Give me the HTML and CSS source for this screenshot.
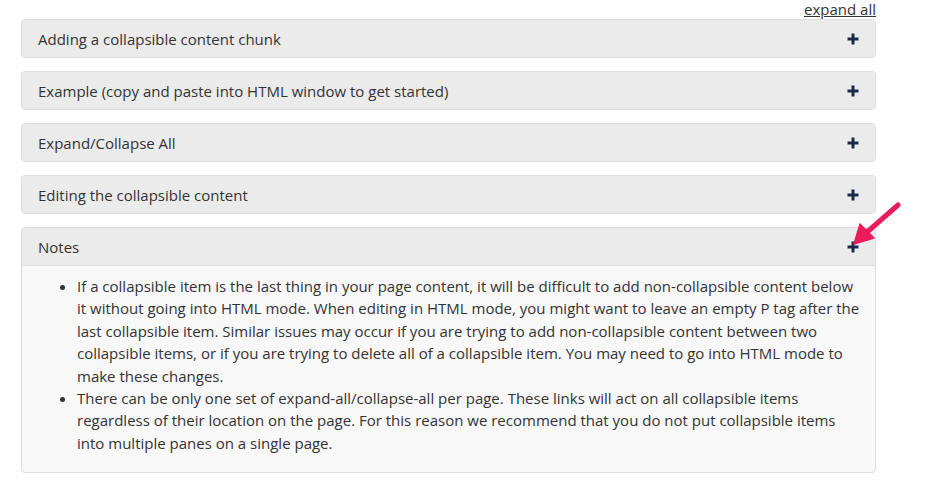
FILE: index.html
```html
<!DOCTYPE html>
<html>
<head>
<meta charset="utf-8">
<link rel="stylesheet" href="styles.css">
</head>
<body>
<div class="wrap">
  <div class="toolbar"><a class="expand" href="#">expand all</a></div>
  <div class="panel">
    <div class="head"><span>Adding a collapsible content chunk</span><svg class="plus" viewBox="0 0 12 12"><path d="M6 0.5v11M0.5 6h11"/></svg></div>
  </div>
  <div class="panel">
    <div class="head"><span>Example (copy and paste into HTML window to get started)</span><svg class="plus" viewBox="0 0 12 12"><path d="M6 0.5v11M0.5 6h11"/></svg></div>
  </div>
  <div class="panel">
    <div class="head"><span>Expand/Collapse All</span><svg class="plus" viewBox="0 0 12 12"><path d="M6 0.5v11M0.5 6h11"/></svg></div>
  </div>
  <div class="panel">
    <div class="head"><span>Editing the collapsible content</span><svg class="plus" viewBox="0 0 12 12"><path d="M6 0.5v11M0.5 6h11"/></svg></div>
  </div>
  <div class="panel open">
    <div class="head"><span>Notes</span><svg class="plus" viewBox="0 0 12 12"><path d="M6 0.5v11M0.5 6h11"/></svg></div>
    <div class="body">
      <ul>
        <li>If a collapsible item is the last thing in your page content, it will be difficult to add non-collapsible content below it without going into HTML mode. When editing in HTML mode, you might want to leave an empty P tag after the last collapsible item. Similar issues may occur if you are trying to add non-collapsible content between two collapsible items, or if you are trying to delete all of a collapsible item. You may need to go into HTML mode to make these changes.</li>
        <li>There can be only one set of expand-all/collapse-all per page. These links will act on all collapsible items regardless of their location on the page. For this reason we recommend that you do not put collapsible items into multiple panes on a single page.</li>
      </ul>
    </div>
    <svg class="arrow" viewBox="0 0 50 46" width="50" height="46"><path class="shaft" d="M46 3 L14 31"/><path class="tip" d="M2 42 L8 22 L22 36 Z"/></svg>
  </div>
</div>
</body>
</html>
```

FILE: styles.css
```css
html, body {
  margin: 0;
  padding: 0;
  background: #ffffff;
}
body {
  font-family: "Open Sans", "Liberation Sans", sans-serif;
  font-size: 15px;
  color: #333333;
}
.wrap {
  width: 855px;
  margin-left: 21px;
}
.toolbar {
  display: flex;
  justify-content: flex-end;
  height: 19px;
  line-height: 18px;
}
.expand {
  color: #333333;
  text-decoration: underline;
  font-size: 15px;
}
.panel {
  position: relative;
  border: 1px solid #dddddd;
  border-radius: 4px;
  margin-bottom: 13px;
  background: #f8f8f8;
}
.head {
  display: flex;
  align-items: center;
  justify-content: space-between;
  background: #ebebeb;
  padding: 9px 16px 7px 16px;
  line-height: 21px;
  border-radius: 3px;
}
.plus {
  width: 12px;
  height: 12px;
  fill: none;
  stroke: #1c2a4a;
  stroke-width: 3;
  margin-top: -1px;
}
.open .head {
  border-bottom: 1px solid #dddddd;
  border-radius: 3px 3px 0 0;
}
.body {
  padding: 9px 15px 18px;
}
.body ul {
  margin: 0;
  padding-left: 40px;
  line-height: 22.4px;
}
.arrow {
  position: absolute;
  top: -26px;
  right: -27px;
  overflow: visible;
}
.arrow .shaft {
  stroke: #ec1c5c;
  stroke-width: 5;
  stroke-linecap: round;
  fill: none;
}
.arrow .tip {
  fill: #ec1c5c;
  stroke: #ec1c5c;
  stroke-width: 1.5;
  stroke-linejoin: round;
}
```
